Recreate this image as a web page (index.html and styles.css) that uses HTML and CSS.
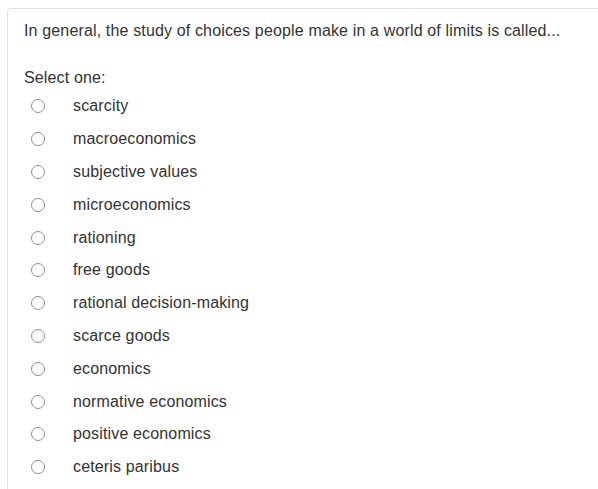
FILE: index.html
```html
<!DOCTYPE html>
<html>
<head>
<meta charset="utf-8">
<link rel="stylesheet" href="styles.css">
</head>
<body>
<div class="card">
  <div class="qtext">In general, the study of choices people make in a world of limits is called...</div>
  <div class="prompt">Select one:</div>
  <div class="answers">
    <label class="opt"><span class="radio"></span><span class="lbl">scarcity</span></label>
    <label class="opt"><span class="radio"></span><span class="lbl">macroeconomics</span></label>
    <label class="opt"><span class="radio"></span><span class="lbl">subjective values</span></label>
    <label class="opt"><span class="radio"></span><span class="lbl">microeconomics</span></label>
    <label class="opt"><span class="radio"></span><span class="lbl">rationing</span></label>
    <label class="opt"><span class="radio"></span><span class="lbl">free goods</span></label>
    <label class="opt"><span class="radio"></span><span class="lbl">rational decision-making</span></label>
    <label class="opt"><span class="radio"></span><span class="lbl">scarce goods</span></label>
    <label class="opt"><span class="radio"></span><span class="lbl">economics</span></label>
    <label class="opt"><span class="radio"></span><span class="lbl">normative economics</span></label>
    <label class="opt"><span class="radio"></span><span class="lbl">positive economics</span></label>
    <label class="opt"><span class="radio"></span><span class="lbl">ceteris paribus</span></label>
  </div>
</div>
</body>
</html>
```
FILE: styles.css
```css
html, body {
  margin: 0;
  padding: 0;
  background: #fff;
  overflow: hidden;
}
body {
  font-family: "Liberation Sans", Arial, sans-serif;
  font-size: 16px;
  letter-spacing: 0.15px;
  color: #333;
}
.card {
  margin: 8px -40px 0 7px;
  border: 1px solid #dedede;
  border-radius: 4px;
  padding: 12px 16px 40px 16px;
  height: 600px;
}
.qtext {
  line-height: 20px;
}
.prompt {
  margin-top: 27px;
  line-height: 20px;
}
.answers {
  margin-top: 2px;
}
.opt {
  display: flex;
  align-items: center;
  height: 32.8px;
}
.radio {
  box-sizing: border-box;
  width: 14px;
  height: 14px;
  border: 1px solid #8f8f8f;
  border-radius: 50%;
  margin-left: 7px;
  flex: none;
}
.lbl {
  margin-left: 28px;
  line-height: 20px;
}
```
